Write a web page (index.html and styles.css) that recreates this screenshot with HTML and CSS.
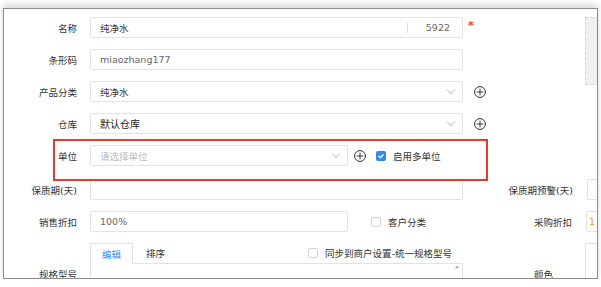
FILE: index.html
```html
<!DOCTYPE html>
<html lang="zh">
<head>
    <meta charset="UTF-8">
    <title>商品</title>
    <link rel="stylesheet" href="styles.css">
</head>
<body>
    <div class="frame">
        <div class="mark"></div>

        <div class="row">
            <span class="label">名称</span>
            <div class="field name">
                <span class="value">纯净水</span>
                <span class="count">5922</span>
            </div>
            <span class="star">*</span>
            <div class="photo"></div>
        </div>

        <div class="row">
            <span class="label">条形码</span>
            <div class="field"><span class="value grey">miaozhang177</span></div>
        </div>

        <div class="row">
            <span class="label">产品分类</span>
            <div class="field select"><span class="value">纯净水</span><i class="caret"></i></div>
            <svg class="plus" viewBox="0 0 12 12"><circle cx="6" cy="6" r="5.4"/><path d="M6 2.6v6.8M2.6 6h6.8"/></svg>
        </div>

        <div class="row">
            <span class="label">仓库</span>
            <div class="field select"><span class="value dark">默认仓库</span><i class="caret"></i></div>
            <svg class="plus" viewBox="0 0 12 12"><circle cx="6" cy="6" r="5.4"/><path d="M6 2.6v6.8M2.6 6h6.8"/></svg>
        </div>

        <div class="row unit">
            <span class="label">单位</span>
            <div class="field select short"><span class="value hint">请选择单位</span><i class="caret"></i></div>
            <svg class="plus small" viewBox="0 0 12 12"><circle cx="6" cy="6" r="5.4"/><path d="M6 2.6v6.8M2.6 6h6.8"/></svg>
            <span class="check on"><svg viewBox="0 0 10 10"><path d="M2.6 5.1l1.7 1.7 3.2-3.4"/></svg></span>
            <span class="check-text">启用多单位</span>
        </div>

        <div class="row keep">
            <span class="label">保质期(天)</span>
            <div class="field"></div>
            <span class="label right">保质期预警(天)</span>
            <div class="field side"></div>
        </div>

        <div class="row">
            <span class="label">销售折扣</span>
            <div class="field short"><span class="value grey">100%</span></div>
            <span class="check off"></span>
            <span class="check-text">客户分类</span>
            <span class="label right buy">采购折扣</span>
            <div class="field side tight"><span class="value orange">1</span></div>
        </div>

        <div class="row tabs">
            <span class="label"></span>
            <div class="tabbar">
                <span class="tab active">编辑</span>
                <span class="tab">排序</span>
                <span class="check off sync"></span>
                <span class="check-text">同步到商户设置-统一规格型号</span>
            </div>
            <div class="field side tall"></div>
        </div>

        <div class="row last">
            <span class="label">规格型号</span>
            <div class="panel"><span class="up"></span></div>
            <span class="label right color">颜色</span>
        </div>
    </div>
</body>
</html>
```

FILE: styles.css
```css
body {
    margin: 0;
    background: #fff;
    font-family: "DejaVu Sans", "Noto Sans CJK SC", sans-serif;
    font-size: 9.5px;
    color: #333;
}

.frame {
    position: relative;
    margin: 8px 3px 0 3px;
    height: 261px;
    border: 1px solid #8c8c8c;
    overflow: hidden;
    padding-top: 8px;
    box-shadow: 0 -4px 6px rgba(0, 0, 0, 0.14);
}

.mark {
    position: absolute;
    left: 49px;
    top: 130px;
    width: 431px;
    height: 38px;
    border: 2px solid #e8392e;
    z-index: 2;
}

.row {
    display: flex;
    align-items: center;
    height: 21px;
    margin-bottom: 11px;
    white-space: nowrap;
}

.row.unit {
    margin-top: 1px;
    margin-bottom: 13px;
}

.row.tabs {
    margin-top: 1px;
    margin-bottom: 0;
    align-items: flex-start;
}

.label {
    flex: none;
    width: 73px;
    margin-right: 13px;
    text-align: right;
    color: #333;
}

.label.right {
    width: 80px;
    margin-left: 30px;
    margin-right: 14px;
}

.label.buy {
    margin-left: 66px;
}

.field {
    flex: none;
    box-sizing: border-box;
    width: 373px;
    height: 21px;
    border: 1px solid #e3e3e3;
    border-radius: 2px;
    display: flex;
    align-items: center;
    padding-left: 9px;
}

.field.short {
    width: 258px;
}

.field.side {
    width: 40px;
}

.field.tight {
    padding-left: 2px;
}

.field.tall {
    height: 60px;
}

.value {
    color: #333;
}

.value.grey {
    color: #666;
}

.value.dark {
    color: #222;
    font-size: 10px;
}

.value.hint {
    color: #bbb;
}

.value.orange {
    color: #f0a020;
}

.name {
    justify-content: space-between;
    padding-right: 12px;
}

.count {
    color: #666;
    border-left: 1px solid #ddd;
    padding-left: 18px;
    line-height: 10px;
}

.star {
    color: #e8392e;
    margin-left: 5px;
    font-size: 11px;
    font-weight: bold;
    align-self: flex-start;
    margin-top: 2px;
}

.photo {
    flex: none;
    align-self: flex-start;
    width: 20px;
    height: 68px;
    margin-left: 111px;
    box-sizing: border-box;
    background: #f0f0f0;
    border: 1px dashed #d6d6d6;
}

.select {
    justify-content: space-between;
    padding-right: 8px;
}

.caret {
    width: 5px;
    height: 5px;
    border-right: 1px solid #c8c8c8;
    border-bottom: 1px solid #c8c8c8;
    transform: rotate(45deg);
    margin-top: -4px;
}

.plus {
    width: 12px;
    height: 12px;
    margin-left: 11px;
    fill: none;
    stroke: #333;
    stroke-width: 1;
}

.plus.small {
    margin-left: 6px;
}

.check {
    flex: none;
    box-sizing: border-box;
    width: 10px;
    height: 10px;
    border-radius: 2px;
    display: inline-flex;
}

.check.on {
    background: #2d8cf0;
    margin-left: 10px;
}

.check.on svg {
    width: 10px;
    height: 10px;
    fill: none;
    stroke: #fff;
    stroke-width: 1.4;
}

.check.off {
    border: 1px solid #d4d4d4;
    background: #fff;
    margin-left: 23px;
}

.check-text {
    margin-left: 7px;
    color: #333;
}

.tabbar {
    flex: none;
    width: 373px;
    height: 20px;
    display: flex;
    align-items: center;
    border-bottom: 1px solid #e3e3e3;
}

.tab {
    color: #333;
    padding: 0 13px;
}

.tab.active {
    box-sizing: border-box;
    height: 21px;
    width: 43px;
    text-align: center;
    line-height: 21px;
    margin-top: 1px;
    color: #2d8cf0;
    border: 1px solid #e3e3e3;
    border-bottom-color: #fff;
    background: #fff;
    padding: 0;
}

.check.sync {
    margin-left: 130px;
}

.tabs .field.side {
    margin-left: 122px;
}

.last {
    align-items: flex-start;
    margin-top: -1px;
}

.last .label {
    margin-top: 4px;
}

.panel {
    flex: none;
    box-sizing: border-box;
    width: 373px;
    height: 30px;
    border: 1px solid #e3e3e3;
    border-top: none;
    position: relative;
}

.up {
    position: absolute;
    right: 3px;
    top: 3px;
    border-left: 2px solid transparent;
    border-right: 2px solid transparent;
    border-bottom: 2px solid #999;
}

.label.color {
    margin-left: 10px;
    margin-top: 4px;
}
```
